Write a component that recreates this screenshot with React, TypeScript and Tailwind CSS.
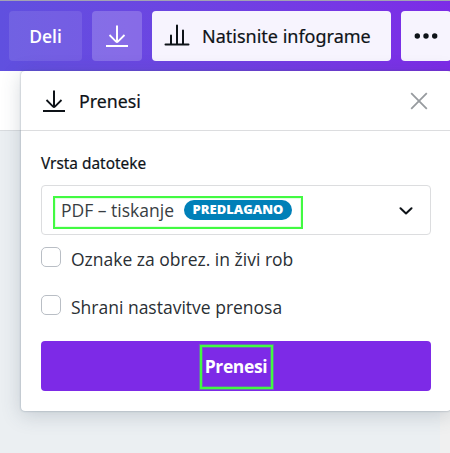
import React, { useState } from 'react';

const options = [
  { id: 0, label: 'Oznake za obrez. in živi rob' },
  { id: 1, label: 'Shrani nastavitve prenosa' }
];

const DownloadIcon = () => (
  <svg width="24" height="24" viewBox="0 0 24 24" fill="none" stroke="currentColor" strokeWidth="2">
    <path d="M12 1.5V18" />
    <path d="M4.5 11l6.6 6.7a1.3 1.3 0 0 0 1.8 0l6.6-6.7" strokeWidth="1.8" />
    <path d="M1 22h22" />
  </svg>
);

const ChartIcon = () => (
  <svg width="26" height="24" viewBox="0 0 26 24" fill="none" stroke="currentColor" strokeWidth="2" strokeLinecap="round">
    <path d="M1.5 20.5h23M7 20V11.5M13 20V1.5M19 20V6.5" />
  </svg>
);

const Header = () => (
  <header className="flex h-[71px] w-[460px] gap-2.5 border-t border-[#a3a3b3] bg-linear-to-r from-[#6050df] to-[#7d2ae7] pt-2.5 pl-[9px] text-[17.5px] font-medium">
    <button className="h-[50px] w-[73px] shrink-0 rounded bg-white/10 font-semibold text-white">Deli</button>
    <button className="flex h-[50px] w-[50px] shrink-0 items-center justify-center rounded bg-white/20 text-white">
      <DownloadIcon />
    </button>
    <button className="flex h-[50px] w-[239px] shrink-0 items-center gap-3 rounded bg-[#f7f4fe] pl-3 whitespace-nowrap text-[#0e1318]">
      <ChartIcon />
      <span className="font-['Noto_Sans',sans-serif] text-[18px] font-normal [-webkit-text-stroke:0.2px]">Natisnite infograme</span>
    </button>
    <button className="flex h-[50px] w-[50px] shrink-0 items-center justify-center rounded bg-[#f7f4fe] text-[#0e1318]">
      <svg width="24" height="6" viewBox="0 0 24 6" fill="currentColor">
        <circle cx="3.3" cy="3" r="2.7" />
        <circle cx="12" cy="3" r="2.7" />
        <circle cx="20.7" cy="3" r="2.7" />
      </svg>
    </button>
  </header>
);

export default function App() {
  const [checked, setChecked] = useState<number[]>([]);

  const handlerToggle = (id: number) => {
    setChecked((prev) => (prev.includes(id) ? prev.filter((item) => item !== id) : [...prev, id]));
  };

  return (
    <div className="relative h-[453px] w-[450px] overflow-hidden bg-[#ebeff2] font-['Open_Sans','Noto_Sans',sans-serif] text-[#0e1318]">
      <Header />
      <div className="h-[60px] border-b border-[#d9dcdf] bg-white" />
      <div className="ml-auto h-[322px] w-2.5 bg-[#f0f0f0]" />

      <section className="absolute top-[71px] left-[21px] h-[340px] w-[430px] rounded bg-white shadow-[0_0_2px_rgba(64,87,109,0.5),0_4px_20px_rgba(57,76,96,0.22)]">
        <div className="flex h-[60px] items-center border-b border-[#dcdddf] pr-[23px] pl-[21px]">
          <DownloadIcon />
          <h2 className="relative top-px ml-[13px] font-['Noto_Sans',sans-serif] text-[17.8px] font-normal [-webkit-text-stroke:0.2px]">Prenesi</h2>
          <button className="ml-auto text-[#979b9f]">
            <svg width="18" height="18" viewBox="0 0 18 18" fill="none" stroke="currentColor" strokeWidth="1.8">
              <path d="M1.2 1.2l15.6 15.6M16.8 1.2L1.2 16.8" />
            </svg>
          </button>
        </div>

        <div className="px-5 pt-[21px]">
          <div className="h-[33px] font-['Noto_Sans',sans-serif] text-[15.4px] leading-6 font-normal [-webkit-text-stroke:0.2px]">Vrsta datoteke</div>
          <button className="relative flex h-[50px] w-[390px] items-center rounded border border-[#dcdddf] pl-[19px] whitespace-nowrap">
            <span className="text-[17.5px] text-[#383d42]">PDF – tiskanje</span>
            <span className="ml-2.5 flex h-5 w-[108px] items-center justify-center rounded-full bg-[#0080b8] text-[13px] font-extrabold text-white">PREDLAGANO</span>
            <svg className="relative top-px mr-[17px] ml-auto" width="14" height="8" viewBox="0 0 14 8" fill="none" stroke="currentColor" strokeWidth="2" strokeLinecap="round" strokeLinejoin="round">
              <path d="M1.5 1.2L7 6.5l5.5-5.3" />
            </svg>
            <span className="absolute top-2.5 left-[11px] h-[33px] w-[250px] border-2 border-[#42fa42] shadow-[inset_0_0_0_1px_rgba(66,250,66,0.15)]" />
          </button>

          {options.map((option) => (
            <label key={option.id} className="flex h-12 items-start pt-3">
              <input
                type="checkbox"
                checked={checked.includes(option.id)}
                onChange={() => handlerToggle(option.id)}
                className="h-5 w-5 appearance-none rounded-[5px] border border-[#b9bec5] checked:bg-[#7d2ae7]"
              />
              <span className="ml-2.5 text-[17.5px] leading-6 text-[#2a2f34]">{option.label}</span>
            </label>
          ))}

          <button className="relative mt-2.5 flex h-[50px] w-[390px] items-center justify-center rounded bg-[#7d2ae7] text-[17.5px] font-bold tracking-[-0.35px] text-white">
            Prenesi
            <span className="absolute top-1 left-[159px] h-[44px] w-[73px] border-2 border-[#42fa42] shadow-[0_0_0_1px_rgba(66,250,66,0.35),inset_0_0_0_1px_rgba(66,250,66,0.3)]" />
          </button>
        </div>
      </section>
    </div>
  );
}
